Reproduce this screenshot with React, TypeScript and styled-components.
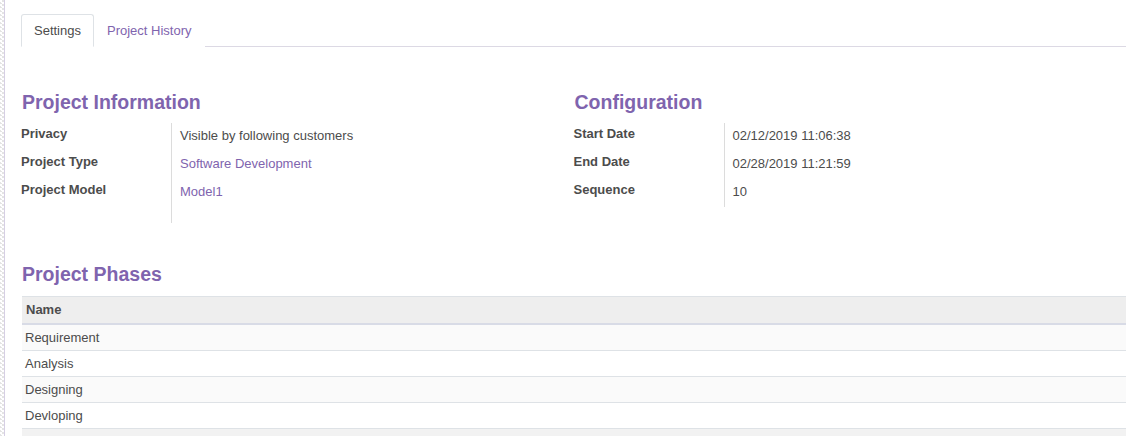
import React from "react";
import styled, { createGlobalStyle } from "styled-components";

const GlobalStyle = createGlobalStyle`
  html, body {
    margin: 0;
    padding: 0;
  }
  body {
    font-family: "Liberation Sans", Arial, sans-serif;
    font-size: 13px;
    line-height: 1.5;
    color: #4c4c4c;
    background-color: #ffffff;
    background-image:
      linear-gradient(45deg, #e4e4e4 25%, transparent 25%, transparent 75%, #e4e4e4 75%),
      linear-gradient(45deg, #e4e4e4 25%, transparent 25%, transparent 75%, #e4e4e4 75%);
    background-size: 4px 4px;
    background-position: 0 0, 2px 2px;
    background-repeat: repeat-y;
  }
`;

const Page = styled.div`
  margin-left: 4px;
  border-left: 1px solid #d6cfe4;
  background: #ffffff;
  min-height: 436px;
  padding: 14px 9px 0 16px;
  box-sizing: border-box;
`;

const TabBar = styled.div`
  display: flex;
  border-bottom: 1px solid #dcd9e4;
`;

const Tab = styled.div<{ $active?: boolean }>`
  padding: 6px 12px;
  line-height: 19px;
  border: 1px solid ${(p) => (p.$active ? "#dee2e6" : "transparent")};
  border-bottom-color: ${(p) => (p.$active ? "#ffffff" : "transparent")};
  border-radius: 3px 3px 0 0;
  margin-bottom: -1px;
  background: #ffffff;
  color: ${(p) => (p.$active ? "#4c4c4c" : "#7f64ae")};
  cursor: pointer;
`;

const Groups = styled.div`
  display: grid;
  grid-template-columns: 1fr 1fr;
  margin-top: 41px;
`;

const Group = styled.div`
  display: flex;
  flex-direction: column;
`;

const Heading = styled.div`
  font-size: 19.5px;
  font-weight: bold;
  color: #7f64ae;
  line-height: 29px;
  padding-left: 1px;
  margin-bottom: 6px;
`;

const Fields = styled.div<{ $extra?: number }>`
  display: grid;
  grid-template-columns: 150px 1fr;
  & > :nth-last-child(-n + 2) {
    padding-bottom: ${(p) => p.$extra ?? 0}px;
  }
`;

const Label = styled.div`
  font-weight: bold;
  line-height: 19px;
  padding-top: 1px;
  height: 27px;
  box-sizing: content-box;
  color: #4c4c4c;
`;

const Value = styled.div<{ $link?: boolean }>`
  border-left: 1px solid #dcdcdc;
  padding-left: 8px;
  padding-top: 3px;
  height: 25px;
  box-sizing: content-box;
  line-height: 19px;
  color: ${(p) => (p.$link ? "#7f64ae" : "#4c4c4c")};
`;

const PhasesSection = styled.div`
  margin-top: 37px;
`;

const Table = styled.table`
  width: calc(100% - 1px);
  margin-left: 1px;
  border-collapse: collapse;
  margin-top: 7px;
`;

const HeadCell = styled.th`
  background: #eeeeee;
  border-top: 1px solid #dee2e6;
  border-bottom: 2px solid #d8dbe6;
  text-align: left;
  font-weight: bold;
  padding: 3px 4px 4px;
  line-height: 19px;
  color: #4c4c4c;
`;

const Row = styled.tr<{ $striped?: boolean }>`
  background: ${(p) => (p.$striped ? "#fafafa" : "#ffffff")};
`;

const Cell = styled.td`
  border-top: 1px solid #dee2e6;
  padding: 3px 3px;
  line-height: 19px;
  color: #4c4c4c;
`;

const FootCell = styled.td`
  border-top: 1px solid #dee2e6;
  background: #f2f2f2;
  height: 25px;
`;

const leftFields = [
  { label: "Privacy", value: "Visible by following customers", link: false },
  { label: "Project Type", value: "Software Development", link: true },
  { label: "Project Model", value: "Model1", link: true },
];

const rightFields = [
  { label: "Start Date", value: "02/12/2019 11:06:38" },
  { label: "End Date", value: "02/28/2019 11:21:59" },
  { label: "Sequence", value: "10" },
];

const phases = ["Requirement", "Analysis", "Designing", "Devloping"];

export default function App() {
  return (
    <>
      <GlobalStyle />
      <Page>
        <TabBar>
          <Tab $active>Settings</Tab>
          <Tab>Project History</Tab>
        </TabBar>

        <Groups>
          <Group>
            <Heading>Project Information</Heading>
            <Fields $extra={16}>
              {leftFields.map((f) => (
                <React.Fragment key={f.label}>
                  <Label>{f.label}</Label>
                  <Value $link={f.link}>{f.value}</Value>
                </React.Fragment>
              ))}
            </Fields>
          </Group>
          <Group>
            <Heading>Configuration</Heading>
            <Fields>
              {rightFields.map((f) => (
                <React.Fragment key={f.label}>
                  <Label>{f.label}</Label>
                  <Value>{f.value}</Value>
                </React.Fragment>
              ))}
            </Fields>
          </Group>
        </Groups>

        <PhasesSection>
          <Heading>Project Phases</Heading>
          <Table>
            <thead>
              <tr>
                <HeadCell>Name</HeadCell>
              </tr>
            </thead>
            <tbody>
              {phases.map((p, i) => (
                <Row key={p} $striped={i % 2 === 0}>
                  <Cell>{p}</Cell>
                </Row>
              ))}
            </tbody>
            <tfoot>
              <tr>
                <FootCell />
              </tr>
            </tfoot>
          </Table>
        </PhasesSection>
      </Page>
    </>
  );
}
